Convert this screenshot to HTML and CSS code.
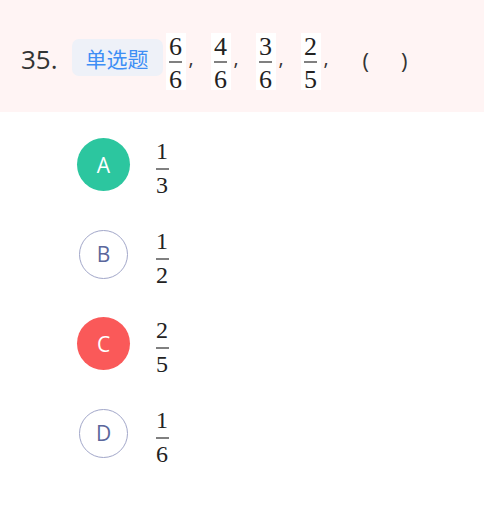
FILE: index.html
```html
<!DOCTYPE html>
<html lang="zh">
<head>
<meta charset="utf-8">
<link rel="stylesheet" href="styles.css">
</head>
<body>
<div class="q-head">
  <span class="q-num">35.</span>
  <span class="q-tag">单选题</span>
  <span class="stem">
    <span class="frac"><span class="n">6</span><svg class="bar" width="13" height="2" viewBox="0 0 13 2"><rect width="13" height="2" fill="#808080"/></svg><span class="d">6</span></span><span class="sep">,</span>
    <span class="frac"><span class="n">4</span><svg class="bar" width="13" height="2" viewBox="0 0 13 2"><rect width="13" height="2" fill="#808080"/></svg><span class="d">6</span></span><span class="sep">,</span>
    <span class="frac"><span class="n">3</span><svg class="bar" width="13" height="2" viewBox="0 0 13 2"><rect width="13" height="2" fill="#808080"/></svg><span class="d">6</span></span><span class="sep">,</span>
    <span class="frac"><span class="n">2</span><svg class="bar" width="13" height="2" viewBox="0 0 13 2"><rect width="13" height="2" fill="#808080"/></svg><span class="d">5</span></span><span class="sep">,</span>
    <span class="paren">(</span><span class="paren paren-r">)</span>
  </span>
</div>
<ul class="options">
  <li class="opt"><span class="mark mark-ok">A</span><span class="frac frac-sm"><span class="n">1</span><span class="d">3</span></span></li>
  <li class="opt"><span class="mark">B</span><span class="frac frac-sm"><span class="n">1</span><span class="d">2</span></span></li>
  <li class="opt"><span class="mark mark-bad">C</span><span class="frac frac-sm"><span class="n">2</span><span class="d">5</span></span></li>
  <li class="opt"><span class="mark">D</span><span class="frac frac-sm"><span class="n">1</span><span class="d">6</span></span></li>
</ul>
</body>
</html>
```

FILE: styles.css
```css
html, body {
  margin: 0;
  padding: 0;
  background: #ffffff;
}
body {
  font-family: "Open Sans", "Noto Sans", "Noto Sans CJK SC", sans-serif;
  color: #333333;
}
.q-head {
  height: 112px;
  background: #fff4f4;
  display: flex;
  align-items: center;
  padding-left: 21px;
  box-sizing: border-box;
}
.q-num {
  font-size: 26px;
  line-height: 30px;
  color: #333333;
  margin-top: 6px;
}
.q-tag {
  margin-left: 14px;
  height: 37px;
  width: 91px;
  box-sizing: border-box;
  display: flex;
  align-items: center;
  justify-content: center;
  background: #eef1f8;
  border-radius: 7px;
  color: #3e8ef5;
  font-family: "Noto Sans CJK SC", sans-serif;
  font-size: 21px;
  margin-top: 3px;
}
.stem {
  display: flex;
  align-items: flex-start;
  height: 57px;
  margin-left: 3px;
  margin-top: 11px;
}
.frac {
  display: flex;
  flex-direction: column;
  align-items: center;
  width: 20px;
  height: 57px;
  background: #ffffff;
  font-family: "Liberation Serif", serif;
  font-size: 26px;
  color: #222222;
}
.frac .n, .frac .d {
  display: block;
  flex: none;
  width: 13px;
  text-align: center;
  line-height: 27px;
}
.frac .n {
  height: 28px;
}
.frac .bar {
  display: block;
  flex: none;
  width: 13px;
  height: 2px;
}
.frac .d {
  height: 24px;
  margin-top: 3px;
}
.sep {
  width: 25px;
  font-size: 20px;
  line-height: 20px;
  color: #333333;
  padding-left: 3px;
  box-sizing: border-box;
  margin-top: 15px;
}
.paren {
  font-size: 22px;
  line-height: 26px;
  color: #333333;
  margin-left: 17px;
  margin-top: 14px;
}
.paren-r {
  margin-left: 32px;
}
.options {
  list-style: none;
  margin: 0;
  padding: 8px 0 0 77px;
}
.opt {
  height: 89.5px;
  display: flex;
  align-items: center;
}
.mark {
  width: 53px;
  height: 53px;
  display: flex;
  align-items: center;
  justify-content: center;
  font-size: 21px;
  color: #5b679c;
  position: relative;
}
.mark::before {
  content: "";
  position: absolute;
  left: 2px;
  top: 2px;
  width: 47px;
  height: 47px;
  border: 1px solid #a2a7c9;
  border-radius: 50%;
}
.mark-ok, .mark-bad {
  color: #ffffff;
  border-radius: 50%;
}
.mark-ok { background: #2cc69f; }
.mark-bad { background: #fa5959; }
.mark-ok::before, .mark-bad::before { display: none; }
.frac-sm {
  margin-left: 22px;
  font-size: 24px;
  height: 59px;
  background: transparent;
  margin-top: 8px;
}
.frac-sm .n {
  height: 29px;
  line-height: 25px;
  border-bottom: 2px solid #808080;
}
.frac-sm .d {
  line-height: 25px;
  height: 25px;
  margin-top: 3px;
}
```
